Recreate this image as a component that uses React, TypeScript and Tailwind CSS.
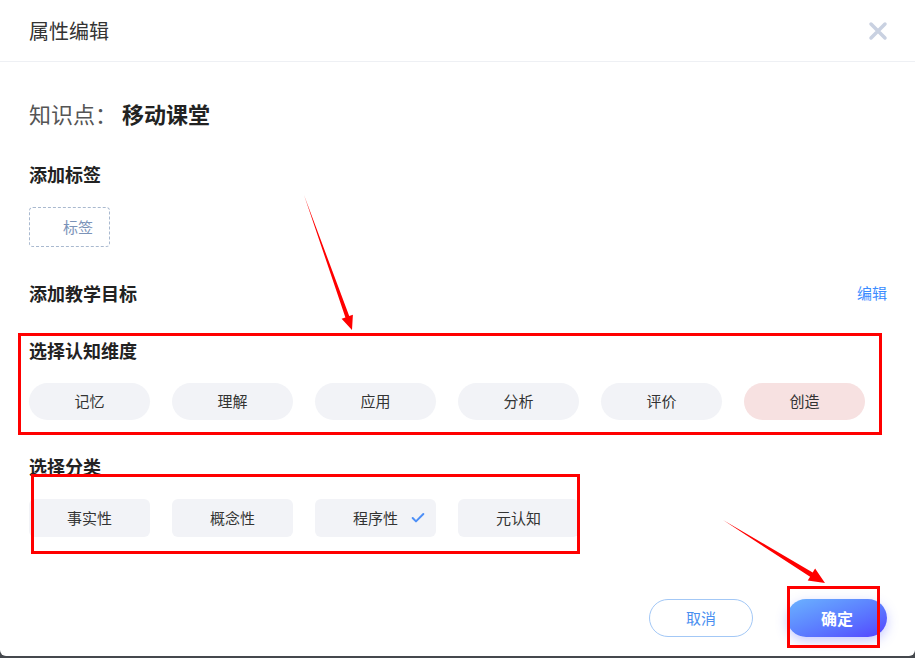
import React from "react";
import { Check } from "lucide-react";

const dims = ["记忆", "理解", "应用", "分析", "评价", "创造"];
const kinds = ["事实性", "概念性", "程序性", "元认知"];

export default function App() {
  return (
    <div
      className="relative w-full h-[658px] bg-[#45484d] overflow-hidden"
      style={{ fontFamily: '"Noto Sans CJK SC", "Noto Sans", sans-serif' }}
    >
      <div className="h-[656px] bg-white rounded-b-[6px] flex flex-col">
        {/* Header */}
        <div className="h-[62px] shrink-0 flex items-center justify-between pl-[29px] pr-[28px] border-b border-[#eef0f4]">
          <span className="text-[20px] leading-[28px] text-[#333]">属性编辑</span>
          <svg width="20" height="20" viewBox="0 0 20 20" className="mr-[-1px]">
            <path d="M3 3 L17 17 M17 3 L3 17" stroke="#c9d1e1" strokeWidth="3.5" strokeLinecap="round" />
          </svg>
        </div>

        {/* Body */}
        <div className="flex flex-col pl-[29px] pr-[28px]">
          <div className="mt-[37px] flex items-center h-[28px] leading-[28px]">
            <span className="text-[22px] text-[#555]">知识点：</span>
            <span className="text-[22px] font-bold text-[#222] ml-[5px]">移动课堂</span>
          </div>

          <div className="mt-[35px] h-[24px] leading-[24px] text-[18px] font-bold text-[#222]">添加标签</div>
          <div className="mt-[21px] w-[81px] h-[40px] border border-dashed border-[#a9b9cf] rounded-[4px] flex items-center pl-[33px] text-[15px] text-[#7b93b8]">
            标签
          </div>

          <div className="mt-[34px] h-[24px] flex items-center justify-between">
            <span className="text-[18px] font-bold text-[#222]">添加教学目标</span>
            <span className="text-[15px] text-[#3b8cff]">编辑</span>
          </div>

          <div className="mt-[33px] h-[24px] leading-[24px] text-[18px] font-bold text-[#222]">选择认知维度</div>
          <div className="mt-[21px] flex gap-[22px]">
            {dims.map((d, i) => (
              <div
                key={d}
                className={
                  "w-[121px] h-[37px] rounded-full flex items-center justify-center text-[15px] text-[#333] " +
                  (i === 5 ? "bg-[#f7e1e1]" : "bg-[#f2f3f7]")
                }
              >
                {d}
              </div>
            ))}
          </div>

          <div className="mt-[34px] h-[24px] leading-[24px] text-[18px] font-bold text-[#222]">选择分类</div>
          <div className="mt-[21px] flex gap-[22px]">
            {kinds.map((k, i) => (
              <div
                key={k}
                className="relative w-[121px] h-[38px] rounded-[6px] bg-[#f2f3f7] flex items-center justify-center text-[15px] text-[#333]"
              >
                {k}
                {i === 2 && (
                  <Check className="absolute right-[10px] top-[11px] w-[16px] h-[16px] text-[#4d8ff7]" strokeWidth={3} />
                )}
              </div>
            ))}
          </div>

          {/* Footer */}
          <div className="mt-[62px] flex justify-end gap-[34px]">
            <button className="w-[104px] h-[38px] rounded-full border border-[#a3c8f6] text-[15px] text-[#4a8ff0] bg-white">
              取消
            </button>
            <button className="w-[100px] h-[38px] rounded-full text-[16px] font-bold text-white bg-gradient-to-br from-[#6cb2ff] to-[#5440ff] shadow-[0_4px_12px_rgba(90,100,255,0.35)]">
              确定
            </button>
          </div>
        </div>
      </div>

      {/* Annotation overlay */}
      <svg className="absolute inset-0 pointer-events-none" width="915" height="658" viewBox="0 0 915 658">
        <rect x="19.5" y="334.5" width="861" height="99" fill="none" stroke="#ff0000" strokeWidth="3" />
        <rect x="32.5" y="475.5" width="546" height="77" fill="none" stroke="#ff0000" strokeWidth="3" />
        <rect x="788.5" y="587.5" width="90" height="59" fill="none" stroke="#ff0000" strokeWidth="3" />
        <polygon points="304,195 349.2,316.1 352.9,314.8 352,330 341.6,318.8 345.4,317.5" fill="#ff0000" />
        <polygon points="723,520 812.7,572.5 815.1,568.6 825,583 807.7,580.6 810.1,576.7" fill="#ff0000" />
      </svg>
    </div>
  );
}
